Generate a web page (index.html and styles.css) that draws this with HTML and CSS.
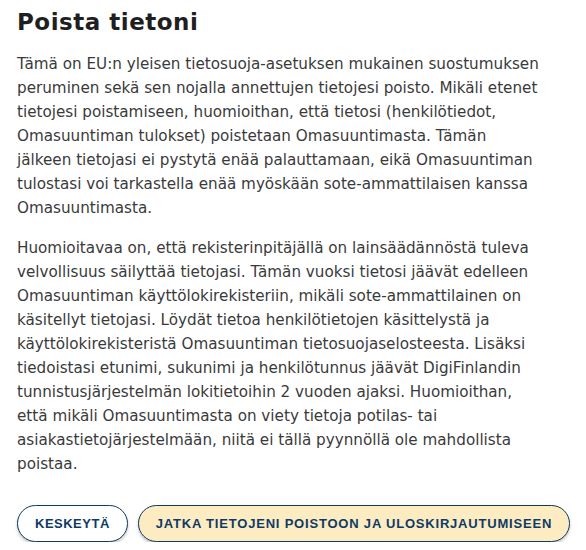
FILE: index.html
```html
<!DOCTYPE html>
<html lang="fi">
<head>
    <meta charset="UTF-8">
    <meta name="viewport" content="width=device-width, initial-scale=1.0">
    <title>Poista tietoni</title>
    <link rel="stylesheet" href="styles.css">
</head>
<body>
    <div class="page">
        <h1 class="title">Poista tietoni</h1>

        <p class="text">
            <span class="line">Tämä on EU:n yleisen tietosuoja-asetuksen mukainen suostumuksen</span>
            <span class="line">peruminen sekä sen nojalla annettujen tietojesi poisto. Mikäli etenet</span>
            <span class="line">tietojesi poistamiseen, huomioithan, että tietosi (henkilötiedot,</span>
            <span class="line">Omasuuntiman tulokset) poistetaan Omasuuntimasta. Tämän</span>
            <span class="line">jälkeen tietojasi ei pystytä enää palauttamaan, eikä Omasuuntiman</span>
            <span class="line">tulostasi voi tarkastella enää myöskään sote-ammattilaisen kanssa</span>
            <span class="line">Omasuuntimasta.</span>
        </p>

        <p class="text">
            <span class="line">Huomioitavaa on, että rekisterinpitäjällä on lainsäädännöstä tuleva</span>
            <span class="line">velvollisuus säilyttää tietojasi. Tämän vuoksi tietosi jäävät edelleen</span>
            <span class="line">Omasuuntiman käyttölokirekisteriin, mikäli sote-ammattilainen on</span>
            <span class="line">käsitellyt tietojasi. Löydät tietoa henkilötietojen käsittelystä ja</span>
            <span class="line">käyttölokirekisteristä Omasuuntiman tietosuojaselosteesta. Lisäksi</span>
            <span class="line">tiedoistasi etunimi, sukunimi ja henkilötunnus jäävät DigiFinlandin</span>
            <span class="line">tunnistusjärjestelmän lokitietoihin 2 vuoden ajaksi. Huomioithan,</span>
            <span class="line">että mikäli Omasuuntimasta on viety tietoja potilas- tai</span>
            <span class="line">asiakastietojärjestelmään, niitä ei tällä pyynnöllä ole mahdollista</span>
            <span class="line">poistaa.</span>
        </p>

        <div class="actions">
            <button class="btn">Keskeytä</button>
            <button class="btn btn-primary">Jatka tietojeni poistoon ja uloskirjautumiseen</button>
        </div>
    </div>
</body>
</html>
```

FILE: styles.css
```css
* {
    margin: 0;
    padding: 0;
    box-sizing: border-box;
}

body {
    font-family: "DejaVu Sans", "Noto Sans", sans-serif;
    background: #ffffff;
    color: #3a3a3a;
}

.page {
    padding: 8px 17px 0 17px;
}

.title {
    font-size: 23px;
    line-height: 28px;
    font-weight: bold;
    letter-spacing: 0.5px;
    color: #1f1f1f;
    margin-bottom: 16px;
}

.text {
    font-size: 15.2px;
    line-height: 24px;
    margin-bottom: 16px;
}

.line {
    display: block;
    white-space: nowrap;
}

.actions {
    display: flex;
    gap: 10px;
    margin-top: 29px;
}

.btn {
    font-family: "Liberation Sans", Arial, sans-serif;
    font-size: 13px;
    font-weight: bold;
    letter-spacing: 0.5px;
    text-transform: uppercase;
    white-space: nowrap;
    flex-shrink: 0;
    color: #0e3a66;
    background: #ffffff;
    border: 1.5px solid #0e3a66;
    border-radius: 20px;
    height: 37px;
    padding: 0 17px;
    box-shadow: 0 2px 3px rgba(20, 20, 20, 0.25);
}

.btn-primary {
    background: #fdecc2;
    letter-spacing: 0.8px;
}
```
